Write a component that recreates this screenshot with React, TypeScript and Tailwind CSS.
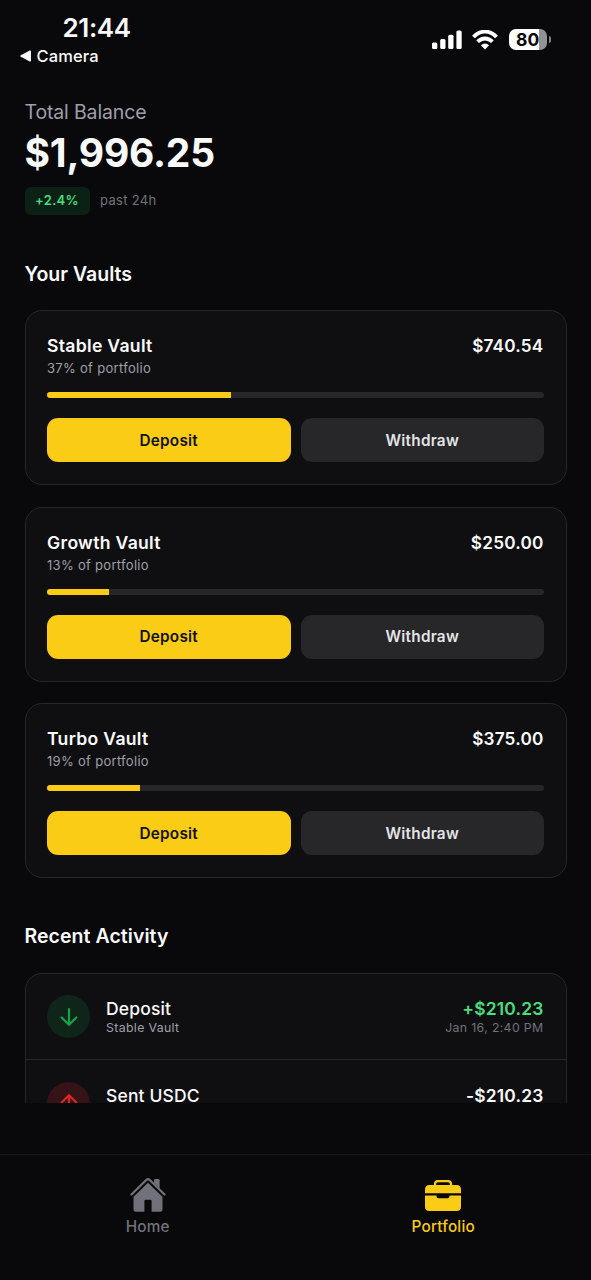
import React from "react";

type Vault = { name: string; share: number; amount: string };

const vaults: Vault[] = [
  { name: "Stable Vault", share: 37.1, amount: "$740.54" },
  { name: "Growth Vault", share: 12.5, amount: "$250.00" },
  { name: "Turbo Vault", share: 18.8, amount: "$375.00" },
];

function StatusBar() {
  return (
    <header className="flex h-[72px] shrink-0 justify-between">
      <div className="flex w-[160px] flex-col pt-[13px]">
        <span className="pl-[62.500px] text-[26px] font-semibold leading-[30px] tracking-[-0.4px]">21:44</span>
        <span className="flex items-center gap-[6px] pl-[19.500px] pt-[2px] text-[16.500px] font-medium leading-[22px] tracking-[0.1px]">
          <svg width="11" height="12" viewBox="0 0 11 12" fill="currentColor">
            <path d="M.8 5.2 9.7.6Q11 .2 11 1.5v9q0 1.3-1.3.9L.8 6.8Q-.4 6 .8 5.2Z" />
          </svg>
          Camera
        </span>
      </div>
      <div className="mt-[28.500px] flex h-[22px] items-center pr-[40px]">
        <svg width="30" height="20" viewBox="0 0 30 20" fill="white">
          <rect x="0" y="12.5" width="5.3" height="6.5" rx="1.5" />
          <rect x="8.2" y="9" width="5.3" height="10" rx="1.5" />
          <rect x="16.2" y="4.8" width="5.3" height="14.2" rx="1.5" />
          <rect x="24.4" y="0.6" width="5.3" height="18.4" rx="1.5" />
        </svg>
        <svg className="ml-[10.5px]" width="26" height="20" viewBox="0 0 26 20" fill="none" stroke="white" strokeWidth="3.8">
          <path d="M1.5 7C8-.2 18-.2 24.500 7" />
          <path d="M5.600 11.700C9.900 7.400 16.100 7.400 20.400 11.700" />
          <path d="M13 19.600 8.900 15.300Q13 11.900 17.100 15.300Z" fill="white" stroke="none" />
        </svg>
        <div className="ml-[11px] flex h-[21px] w-[38px] items-center overflow-hidden rounded-[7px] bg-[linear-gradient(90deg,#fff_80%,#929294_80%)] pl-[7px] text-[17.500px] font-bold leading-[21px] tracking-[0px] text-[#09090b]">
          80
        </div>
        <div className="ml-[1.500px] h-[7px] w-[2.500px] rounded-r-full bg-[#808083]" />
      </div>
    </header>
  );
}

function VaultCard({ name, share, amount }: Vault) {
  return (
    <article className="h-[175px] shrink-0 rounded-[17px] border-[1.5px] border-[#27272a] bg-[#0f0f11] px-[21.500px] pt-[22px]">
      <div className="flex justify-between font-semibold leading-[26px]">
        <h3 className="text-[17.600px] tracking-[0.3px]">{name}</h3>
        <span className="pr-[0.500px] text-[17.200px] tracking-[0.2px]">{amount}</span>
      </div>
      <p className="text-[13px] leading-[18px] tracking-[0.300px] text-[#9f9fa9]">{Math.round(share)}% of portfolio</p>
      <div className="mt-[15px] h-[6px] overflow-hidden rounded-full bg-[#27272a]">
        <div className="h-full bg-[#facc15]" style={{ width: `${share}%` }} />
      </div>
      <div className="mt-[20px] flex h-[44px] gap-[10px] text-[15.300px] font-semibold tracking-[0.25px]">
        <button className="flex-1 rounded-[11px] bg-[#facc15] pt-[2px] text-[#111]">Deposit</button>
        <button className="flex-1 rounded-[11px] bg-[#27272a] pt-[2px] text-[#e4e4e7]">Withdraw</button>
      </div>
    </article>
  );
}

function Arrow({ up }: { up?: boolean }) {
  return (
    <span
      className={
        up
          ? "flex size-[43px] items-center justify-center rounded-full bg-[#351316] text-[#dc2626]"
          : "flex size-[43px] items-center justify-center rounded-full bg-[#10251a] text-[#16a34a]"
      }
    >
      <svg
        width="18"
        height="20"
        viewBox="0 0 18 20"
        fill="none"
        stroke="currentColor"
        strokeWidth="2.2"
        strokeLinecap="round"
        strokeLinejoin="round"
      >
        <path d={up ? "M9 17.800V2.200M1.700 9.500 9 2.200l7.300 7.300" : "M9 2.200v15.600M1.700 10.500 9 17.800l7.300-7.300"} />
      </svg>
    </span>
  );
}

type ActivityProps = { title: string; detail?: string; amount: string; time?: string; up?: boolean };

function Activity({ title, detail, amount, time, up }: ActivityProps) {
  return (
    <div className="flex h-[86.500px] shrink-0 items-center border-b-[1.5px] border-[#27272a] px-[21.500px]">
      <Arrow up={up} />
      <div className="ml-[16px] flex-1">
        <p className="text-[17.500px] font-medium leading-[22px] tracking-[0.15px]">{title}</p>
        <p className="h-[15px] text-[12.300px] leading-[15px] tracking-[0.350px] text-[#9f9fa9]">{detail}</p>
      </div>
      <div className="pr-[0.500px] text-right">
        <p
          className={
            up
              ? "text-[17.400px] font-semibold leading-[22px] tracking-[0.2px]"
              : "text-[17.400px] font-semibold leading-[22px] tracking-[0.2px] text-[#4ade80]"
          }
        >
          {amount}
        </p>
        <p className="h-[15px] text-[12.300px] leading-[15px] tracking-[0.350px] text-[#71717b]">{time}</p>
      </div>
    </div>
  );
}

function HomeIcon() {
  return (
    <svg width="36" height="36" viewBox="0 0 36 36" fill="currentColor">
      <path d="M1.500 17.500 16.500 2.800Q18 1.400 19.500 2.800L34.500 17.500" fill="none" stroke="currentColor" strokeWidth="2.300" strokeLinecap="round" />
      <path d="M24 3.300q0-1.300 1.300-1.300h3q1.300 0 1.300 1.300v8L24 5.800Z" />
      <path d="M3.500 19.700 18 5.700l14.500 14v12.500q0 2.500-2.500 2.500h-8.400V24q0-1.300-1.300-1.300h-4.600q-1.300 0-1.300 1.300v10.700H6q-2.500 0-2.500-2.500Z" />
    </svg>
  );
}

function BriefcaseIcon() {
  return (
    <svg width="36" height="32" viewBox="0 0 36 32" fill="currentColor">
      <path d="M10 6V4q0-2.800 3-2.800h10q3 0 3 2.800v2" fill="none" stroke="currentColor" strokeWidth="2.200" />
      <path d="M4.500 5h27Q36 5 36 9.500V13.300H0V9.500Q0 5 4.500 5Z" />
      <path d="M0 15.400h11.500v.8q0 2 2 2h9q2 0 2-2V15.400H36V27q0 4-4.500 4h-27Q0 31 0 27Z" />
    </svg>
  );
}

export default function App() {
  return (
    <main className="flex h-[1280px] w-[591px] flex-col overflow-hidden bg-[#09090b] font-['Inter',sans-serif] text-[#fafafa]">
      <StatusBar />
      <section className="flex h-[1030.500px] shrink-0 flex-col overflow-hidden px-[24.500px] pt-[26px]">
        <p className="shrink-0 text-[19.500px] leading-[28px] tracking-[-0.15px] text-[#9f9fa9]">Total Balance</p>
        <p className="shrink-0 text-[39px] font-bold leading-[53px] tracking-[-0.2px]">$1,996.25</p>
        <div className="mt-[8px] flex h-[28px] shrink-0 items-center gap-[10.500px] text-[13px]">
          <span className="flex h-full w-[65px] items-center justify-center rounded-[6px] bg-[#0c2115] font-semibold tracking-[0.3px] text-[#4ade80]">+2.4%</span>
          <span className="tracking-[0.300px] text-[#71717b]">past 24h</span>
        </div>
        <h2 className="mt-[44.500px] shrink-0 text-[19.500px] font-semibold leading-[28px] tracking-[0px]">Your Vaults</h2>
        <div className="mt-[22.500px] flex shrink-0 flex-col gap-[21.700px]">
          {vaults.map((v) => (
            <VaultCard key={v.name} {...v} />
          ))}
        </div>
        <h2 className="mt-[44px] shrink-0 text-[19.500px] font-semibold leading-[28px] tracking-[0.050px]">Recent Activity</h2>
        <div className="mt-[22.500px] shrink-0 rounded-[17px] border-[1.5px] border-[#27272a] bg-[#0f0f11]">
          <Activity title="Deposit" detail="Stable Vault" amount="+$210.23" time="Jan 16, 2:40 PM" />
          <Activity title="Sent USDC" amount="-$210.23" up />
        </div>
      </section>
      <nav className="mt-[51.500px] grid flex-1 grid-cols-2 border-t-[1.5px] border-[#18181b] pt-[22px] text-[15.300px] font-medium leading-[22px] tracking-[0.2px]">
        <div className="flex flex-col items-center text-[#71717b]">
          <HomeIcon />
          <span className="mt-[3px]">Home</span>
        </div>
        <div className="flex flex-col items-center text-[#facc15]">
          <div className="flex h-[36px] items-end pb-[1px]">
            <BriefcaseIcon />
          </div>
          <span className="mt-[3px]">Portfolio</span>
        </div>
      </nav>
    </main>
  );
}
